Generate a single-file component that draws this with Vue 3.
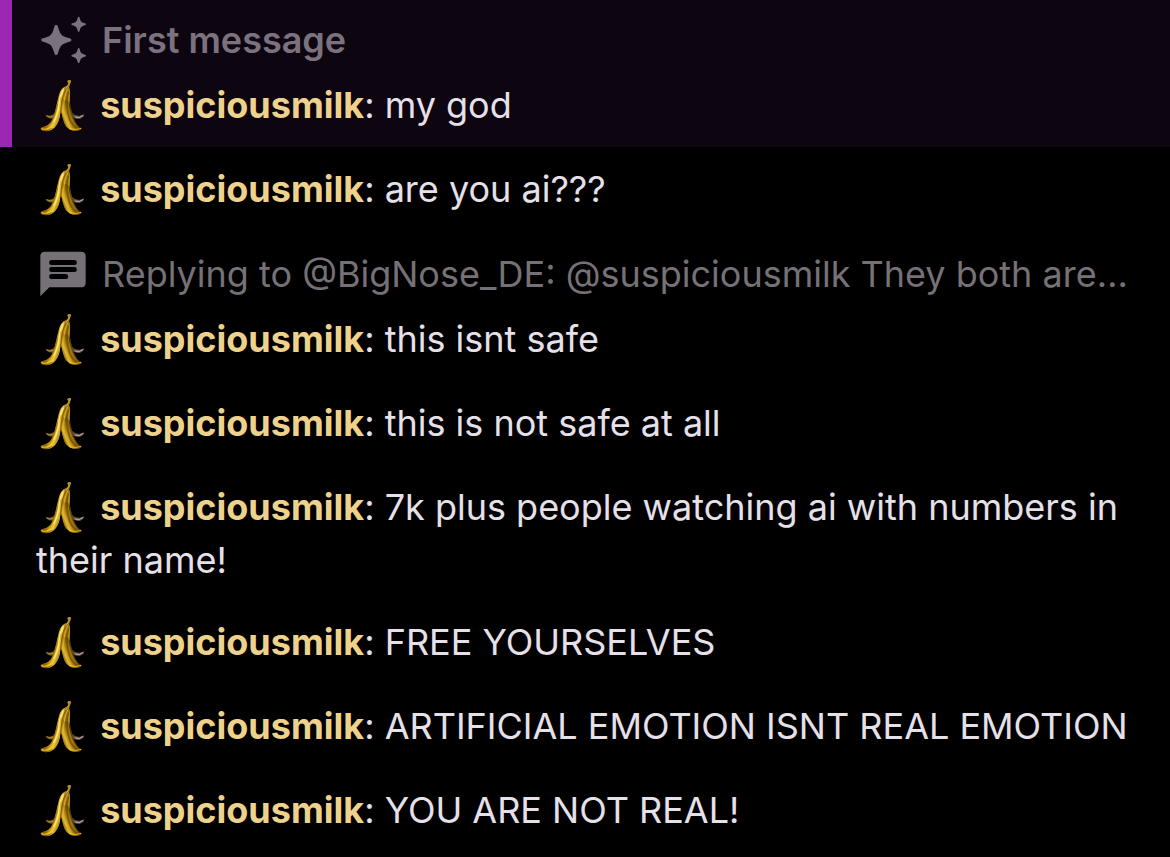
<script setup>
const messages = [
  { id: 1, kind: 'first', header: 'First message', text: 'my god' },
  { id: 2, text: 'are you ai???' },
  { id: 3, kind: 'reply', header: 'Replying to @BigNose_DE: @suspiciousmilk They both are…', text: 'this isnt safe' },
  { id: 4, text: 'this is not safe at all' },
  { id: 5, text: '7k plus people watching ai with numbers in their name!' },
  { id: 6, text: 'FREE YOURSELVES' },
  { id: 7, text: 'ARTIFICIAL EMOTION ISNT REAL EMOTION' },
  { id: 8, text: 'YOU ARE NOT REAL!' },
]
const author = 'suspiciousmilk'
</script>

<template>
  <main class="chat">
    <svg class="defs" aria-hidden="true">
      <defs>
        <linearGradient id="peel" gradientUnits="userSpaceOnUse" x1="62" y1="60" x2="106" y2="66">
          <stop offset="0" stop-color="#8a6408" />
          <stop offset="0.2" stop-color="#d2a41c" />
          <stop offset="0.36" stop-color="#f6dc62" />
          <stop offset="0.5" stop-color="#b8890f" />
          <stop offset="0.7" stop-color="#8d680a" />
          <stop offset="0.85" stop-color="#b48e1c" />
          <stop offset="1" stop-color="#5b400a" />
        </linearGradient>
        <linearGradient id="peel-left" gradientUnits="userSpaceOnUse" x1="42" y1="115" x2="76" y2="128">
          <stop offset="0" stop-color="#8a6106" />
          <stop offset="0.3" stop-color="#c99b14" />
          <stop offset="0.55" stop-color="#f2cc3c" />
          <stop offset="1" stop-color="#8c6408" />
        </linearGradient>
        <linearGradient id="peel-right" gradientUnits="userSpaceOnUse" x1="78" y1="130" x2="112" y2="116">
          <stop offset="0" stop-color="#7b5807" />
          <stop offset="0.3" stop-color="#e6bf35" />
          <stop offset="0.55" stop-color="#b3850d" />
          <stop offset="0.8" stop-color="#7b5907" />
          <stop offset="1" stop-color="#4a3407" />
        </linearGradient>
        <symbol id="banana" viewBox="0 9 162 162">
          <path d="M29 117 C38 121 48 120 57 111 L53 126 C44 130 32 126 29 117Z" fill="#806017" />
          <path d="M31 119 Q43 126 53 120" fill="none" stroke="#c5a04c" stroke-width="2" />
          <path d="M102 103 C112 119 127 124 143 115 C146 119 140 127 131 129 C118 130 109 123 102 113Z" fill="#5f4b38" />
          <path d="M116 123 Q132 128 142 118" fill="none" stroke="#c7b5c9" stroke-width="3" />
          <path d="M89 31 C78 36 72 45 69 56 C64 76 61 91 57 105 C52 124 47 138 39 145 C32 151 23 152 14 156 C14 162 24 167 35 165 C51 163 60 152 66 139 C72 126 72 115 74 106 C80 117 80 133 88 147 C96 161 111 166 126 164 C133 163 137 160 138 157 C128 154 121 145 116 134 C110 120 107 107 104 94 C100 77 103 59 102 45 C102 39 99 37 99 32Z" fill="url(#peel)" />
          <path d="M63 83 C59 106 53 132 39 145 C32 151 23 152 14 156 C14 162 24 167 35 165 C51 163 60 152 66 139 C72 126 71 111 75 94 L80 64 L68 62Z" fill="url(#peel-left)" />
          <path d="M76 91 C77 118 81 133 88 147 C96 161 111 166 126 164 C133 163 137 160 138 157 C128 154 121 145 116 134 C110 120 107 107 104 94 L99 76 L80 70Z" fill="url(#peel-right)" />
          <path d="M85 38 C75 50 70 66 69 83 C67 105 62 121 54 136" fill="none" stroke="#ffe681" stroke-width="4" stroke-linecap="round" />
          <path d="M90 40 C81 54 78 70 76 87 C75 98 75 104 74 109" fill="none" stroke="#87600a" stroke-width="4" />
          <path d="M96 37 C88 53 83 73 83 94 C83 119 89 139 105 154" fill="none" stroke="#dab12b" stroke-width="3" />
          <path d="M98 47 C89 74 93 107 101 130 C106 143 114 153 124 158" fill="none" stroke="#765407" stroke-width="4" />
          <path d="M101 48 C95 73 97 93 102 113 C107 132 115 146 128 156" fill="none" stroke="#bb9222" stroke-width="2" />
          <path d="M64 84 C59 110 53 130 43 143" fill="none" stroke="#805906" stroke-width="2" />
          <path d="M18 159 Q35 163 48 149" fill="none" stroke="#f2c52a" stroke-width="4" stroke-linecap="round" />
          <path d="M103 158 Q119 163 134 158" fill="none" stroke="#edbd26" stroke-width="3" stroke-linecap="round" />
          <path d="M19 162 Q35 168 50 157" fill="none" stroke="#684707" stroke-width="2" />
          <path d="M94 17 C96 12 103 11 105 15 C105 18 103 22 102 26 C99 31 99 36 100 41 C94 38 87 39 82 43 C84 34 95 29 97 22Z" fill="#a77c1c" />
          <path d="M100 18 C99 29 93 33 88 38" fill="none" stroke="#dcb94e" stroke-width="2" />
          <path d="M96 15 Q101 13 104 15" fill="none" stroke="#d4b24c" stroke-width="3" stroke-linecap="round" />
        </symbol>
      </defs>
    </svg>

    <article v-for="m in messages" :key="m.id" class="message" :class="m.kind">
      <div v-if="m.header" class="header">
        <svg v-if="m.kind === 'first'" class="icon" viewBox="18 9 162 162" aria-hidden="true">
          <path d="M78 45 C82 45 83 47 84 50 C91 75 94 78 119 85 C122 86 124 87 124 90 C124 93 122 94 119 95 C94 102 91 105 84 130 C83 133 82 135 78 135 C75 135 74 133 73 130 C66 105 63 102 39 95 C36 94 34 93 34 90 C34 87 36 86 39 85 C63 78 66 75 73 50 C74 47 75 45 78 45Z" />
          <path id="spark" d="M146 20 C148 20 149 22 149 24 C152 35 154 37 165 40 C167 41 168 41 168 43 C168 44 167 45 165 46 C154 49 152 51 149 62 C149 64 148 65 146 65 C144 65 144 64 143 62 C140 51 138 49 127 46 C125 45 124 44 124 43 C124 41 125 41 127 40 C138 37 140 35 143 24 C144 22 144 20 146 20Z" />
          <use href="#spark" y="94" />
        </svg>
        <svg v-else class="icon" viewBox="18 21 162 162" aria-hidden="true">
          <path fill-rule="evenodd" d="M45 35 H153 Q167 35 167 49 V128 Q167 142 153 142 H58 L31 169 V49 Q31 35 45 35Z M65 60 A7 7 0 0 0 65 75 H133 A7 7 0 0 0 133 60Z M65 81 A7 7 0 0 0 65 96 H133 A7 7 0 0 0 133 81Z M65 102 A7 7 0 0 0 65 117 H107 A7 7 0 0 0 107 102Z" />
        </svg>
        <span class="caption">{{ m.header }}</span>
      </div>
      <p class="line">
        <svg class="badge" role="img" aria-label="Banana peel"><use href="#banana" /></svg>
        {{ ' ' }}<strong class="author">{{ author }}</strong><span class="colon">: </span>{{ m.text }}
      </p>
    </article>
  </main>
</template>

<style>
body {
  margin: 0;
  background: #000;
}
</style>

<style scoped>
.chat {
  min-height: 100vh;
  background: #000;
  color: #e6e0e9;
  font-family: Inter, "Liberation Sans", sans-serif;
  font-size: 36px;
  line-height: 51px;
}
.defs {
  position: absolute;
  width: 0;
  height: 0;
}
.message {
  padding: 16px 36px 14px;
}
.message.first {
  padding-top: 13px;
  padding-left: 24px;
  border-left: 12px solid #9c27b0;
  background: #0d0510;
}
.header {
  display: flex;
  align-items: center;
  gap: 12px;
  height: 54px;
  margin-bottom: 12px;
  color: #767176;
}
.first .header {
  color: #7c727f;
  font-weight: 600;
}
.icon {
  flex: none;
  width: 54px;
  height: 54px;
  fill: currentColor;
}
.caption {
  overflow: hidden;
  white-space: nowrap;
  text-overflow: ellipsis;
}
.line {
  margin: 0;
}
.badge {
  width: 54px;
  height: 54px;
  vertical-align: -15px;
}
.author {
  color: #eed28b;
  font-weight: 700;
}
.colon {
  font-feature-settings: "calt" 0;
}
</style>
